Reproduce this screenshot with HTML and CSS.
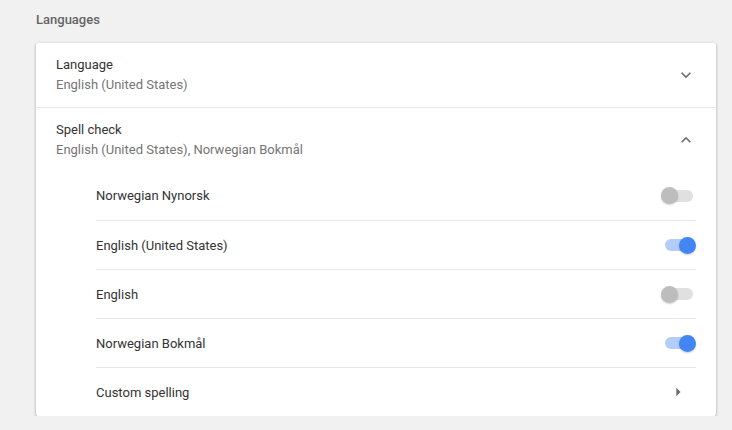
FILE: index.html
```html
<!DOCTYPE html>
<html lang="en">
<head>
  <meta charset="UTF-8">
  <title>Languages</title>
  <link rel="stylesheet" href="styles.css">
</head>
<body>
  <div class="page">
    <h1 class="section-title">Languages</h1>
    <div class="card">
      <div class="row">
        <div class="row-text">
          <div class="label">Language</div>
          <div class="sub">English (United States)</div>
        </div>
        <svg class="icon" viewBox="0 0 24 24"><path d="M16.59 8.59L12 13.17 7.41 8.59 6 10l6 6 6-6z"/></svg>
      </div>
      <div class="row">
        <div class="row-text">
          <div class="label">Spell check</div>
          <div class="sub">English (United States), Norwegian Bokmål</div>
        </div>
        <svg class="icon" viewBox="0 0 24 24"><path d="M12 8l-6 6 1.41 1.41L12 10.83l4.59 4.58L18 14z"/></svg>
      </div>
      <div class="spell-list">
        <div class="item">
          <span>Norwegian Nynorsk</span>
          <div class="toggle"><div class="track"></div><div class="knob"></div></div>
        </div>
        <div class="item">
          <span>English (United States)</span>
          <div class="toggle on"><div class="track"></div><div class="knob"></div></div>
        </div>
        <div class="item">
          <span>English</span>
          <div class="toggle"><div class="track"></div><div class="knob"></div></div>
        </div>
        <div class="item">
          <span>Norwegian Bokmål</span>
          <div class="toggle on"><div class="track"></div><div class="knob"></div></div>
        </div>
        <div class="item">
          <span>Custom spelling</span>
          <svg class="icon arrow" viewBox="0 0 24 24"><path d="M10 17l5-5-5-5v10z"/></svg>
        </div>
      </div>
    </div>
  </div>
</body>
</html>
```

FILE: styles.css
```css
* {
  box-sizing: border-box;
  margin: 0;
  padding: 0;
}
body {
  font-family: Roboto, 'Noto Sans', Arial, sans-serif;
  font-size: 13px;
  background-color: #f1f1f1;
  color: #333;
}
.page {
  padding: 12px 16px 0 36px;
}
.section-title {
  font-size: 13px;
  font-weight: 500;
  line-height: 16px;
  color: #646464;
  margin-bottom: 15px;
}
.card {
  width: 680px;
  background-color: #fff;
  border-radius: 2px;
  box-shadow: 0 1px 3px rgba(0, 0, 0, 0.3), 0 1px 2px rgba(0, 0, 0, 0.1);
}
.row {
  height: 64px;
  padding: 0 20px;
  display: flex;
  align-items: center;
  justify-content: space-between;
}
.row + .row {
  border-top: 1px solid #e8e8e8;
  height: 64px;
}
.row-text {
  line-height: 20px;
}
.label {
  color: #333;
}
.sub {
  color: #757575;
}
.icon {
  width: 20px;
  height: 20px;
  fill: #6e6e6e;
  flex-shrink: 0;
}
.icon.arrow {
  margin-right: 8px;
  fill: #6a6a6a;
}
.spell-list {
  padding: 0 20px 0 60px;
}
.item {
  height: 49px;
  display: flex;
  align-items: center;
  justify-content: space-between;
  color: #333;
}
.item + .item {
  border-top: 1px solid #e8e8e8;
}
.toggle {
  position: relative;
  width: 35px;
  height: 17px;
}
.track {
  position: absolute;
  left: 4px;
  right: 3px;
  top: 2.5px;
  height: 12px;
  border-radius: 6px;
  background-color: #e0e0e0;
}
.knob {
  position: absolute;
  left: 0;
  top: 0;
  width: 17px;
  height: 17px;
  border-radius: 50%;
  background-color: #bdbdbd;
  box-shadow: 0 1px 2px rgba(0, 0, 0, 0.2);
}
.toggle.on .track {
  background-color: #b3cdf9;
}
.toggle.on .knob {
  left: auto;
  right: 0;
  background-color: #4285f4;
}
```
